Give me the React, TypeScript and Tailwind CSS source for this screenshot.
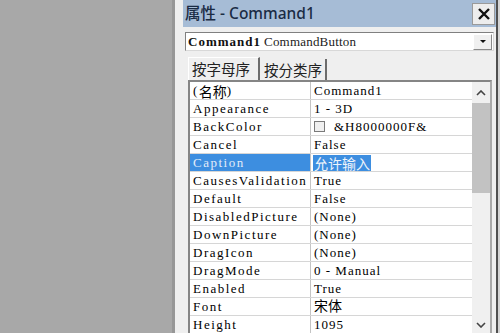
import React from 'react';

const rows: { name: string; value: string; kind?: 'color' | 'cjk' | 'selected' }[] = [
  { name: '(名称)', value: 'Command1' },
  { name: 'Appearance', value: '1 - 3D' },
  { name: 'BackColor', value: '&H8000000F&', kind: 'color' },
  { name: 'Cancel', value: 'False' },
  { name: 'Caption', value: '允许输入', kind: 'selected' },
  { name: 'CausesValidation', value: 'True' },
  { name: 'Default', value: 'False' },
  { name: 'DisabledPicture', value: '(None)' },
  { name: 'DownPicture', value: '(None)' },
  { name: 'DragIcon', value: '(None)' },
  { name: 'DragMode', value: '0 - Manual' },
  { name: 'Enabled', value: 'True' },
  { name: 'Font', value: '宋体', kind: 'cjk' },
  { name: 'Height', value: '1095' },
];

// 把中文字符放大一点，英文保持衬线
const renderText = (text: string) =>
  text.split(/([\u4e00-\u9fff]+)/).map((part, i) =>
    /[\u4e00-\u9fff]/.test(part) ? (
      <span key={i} className="font-['Noto_Sans_CJK_SC',sans-serif] text-[14px] leading-none tracking-normal">
        {part}
      </span>
    ) : (
      <span key={i}>{part}</span>
    )
  );

const Chevron = ({ up }: { up?: boolean }) => (
  <svg width="10" height="6" viewBox="0 0 10 6">
    <polyline
      points={up ? '1,5 5,1 9,5' : '1,1 5,5 9,1'}
      fill="none"
      stroke="#444"
      strokeWidth="1.6"
    />
  </svg>
);

const PropertyRow = ({ row }: { row: (typeof rows)[number] }) => {
  const selected = row.kind === 'selected';
  return (
    <div className="flex h-[18px] shrink-0 border-b border-[#d6d6d6]">
      <div
        className={
          'w-[121px] shrink-0 border-r border-[#c4c4c4] pl-[3px] flex items-center whitespace-nowrap overflow-hidden tracking-[1.5px] ' +
          (selected ? 'bg-[#3d8ee0] text-[#e2ecf8]' : 'text-black')
        }
      >
        {renderText(row.name)}
      </div>
      <div className="flex-1 pl-[2px] flex items-center whitespace-nowrap text-black">
        {row.kind === 'color' && (
          <span className="w-[11px] h-[11px] border border-[#7a7a7a] bg-[#f0f0f0] mr-[8px] ml-[1px]" />
        )}
        {selected ? (
          <span className="bg-[#3d8ee0] text-[#eef4fb] px-[1px] h-[16px] flex items-center">
            {renderText(row.value)}
          </span>
        ) : (
          <span className="pl-[1px]">{renderText(row.value)}</span>
        )}
      </div>
    </div>
  );
};

export default function App() {
  return (
    <div className="w-[500px] h-[333px] flex overflow-hidden bg-[#a8a8a8] font-['Liberation_Serif','Noto_Sans_CJK_SC',serif] text-[13px] tracking-[1px]">
      <div className="w-[172px] shrink-0" />
      <div className="flex-1 flex flex-col bg-[#efefef] border-l-[3px] border-l-[#979797] border-r-2 border-r-[#505050]">
        {/* 标题栏 */}
        <div className="ml-[8px] h-[27px] shrink-0 bg-[#a6bcd6] flex items-center justify-between tracking-normal">
          <span className="pl-[2px] font-['Noto_Sans','Noto_Sans_CJK_SC',sans-serif] text-[15.5px] font-medium text-[#1a2b44] leading-none">
            属性 - Command1
          </span>
          <div className="w-[23px] h-[22px] mr-[1px] bg-[#ededed] border border-[#9a9a9a] flex items-center justify-center">
            <svg width="14" height="14" viewBox="0 0 14 14">
              <path d="M2 2 L12 12 M12 2 L2 12" stroke="#111" strokeWidth="2.4" />
            </svg>
          </div>
        </div>

        {/* 对象下拉框 */}
        <div className="mt-[5px] ml-[10px] mr-[2px] h-[19px] shrink-0 bg-white border border-[#808080] border-r-[#d8d8d8] border-b-[#d8d8d8] flex items-center">
          <span className="pl-[2px] font-bold tracking-[1px] text-[#111]">Command1</span>
          <span className="pl-[3px] tracking-[0.2px] text-[#222]">CommandButton</span>
          <div className="ml-auto w-[19px] h-[16px] mr-[1px] bg-[#f0f0f0] border border-white border-r-[#8a8a8a] border-b-[#8a8a8a] flex items-center justify-center">
            <svg width="6" height="4" viewBox="0 0 6 4">
              <polygon points="0,0 6,0 3,3" fill="#111" />
            </svg>
          </div>
        </div>

        {/* 选项卡 */}
        <div className="mt-[3px] ml-[13px] h-[26px] shrink-0 flex items-end tracking-normal">
          <div className="w-[72px] h-[23px] border-l border-t border-white border-r-2 border-r-[#6c6c6c] pl-[3px] flex items-center font-['Noto_Sans_CJK_SC',sans-serif] text-[14.5px] text-[#222]">
            按字母序
          </div>
          <div className="w-[67px] h-[21px] border-r-2 border-r-[#6c6c6c] pl-[4px] flex items-center font-['Noto_Sans_CJK_SC',sans-serif] text-[14.5px] text-[#222]">
            按分类序
          </div>
        </div>

        {/* 属性表 */}
        <div className="ml-[13px] mr-[4px] flex-1 min-h-0 flex bg-white border-t-2 border-l-2 border-[#858585] border-r-2 border-r-[#a9a9a9]">
          <div className="flex-1 flex flex-col overflow-hidden">
            {rows.map((row) => (
              <PropertyRow key={row.name} row={row} />
            ))}
          </div>
          <div className="w-[18px] shrink-0 bg-[#f0f0f0] flex flex-col items-center">
            <div className="h-[21px] shrink-0 flex items-center justify-center">
              <Chevron up />
            </div>
            <div className="w-full h-[90px] bg-[#c2c2c2]" />
            <div className="flex-1" />
            <div className="h-[17px] shrink-0 flex items-center justify-center">
              <Chevron />
            </div>
          </div>
        </div>
      </div>
      <div className="w-[2px] shrink-0 bg-[#d4d4d4]" />
    </div>
  );
}
